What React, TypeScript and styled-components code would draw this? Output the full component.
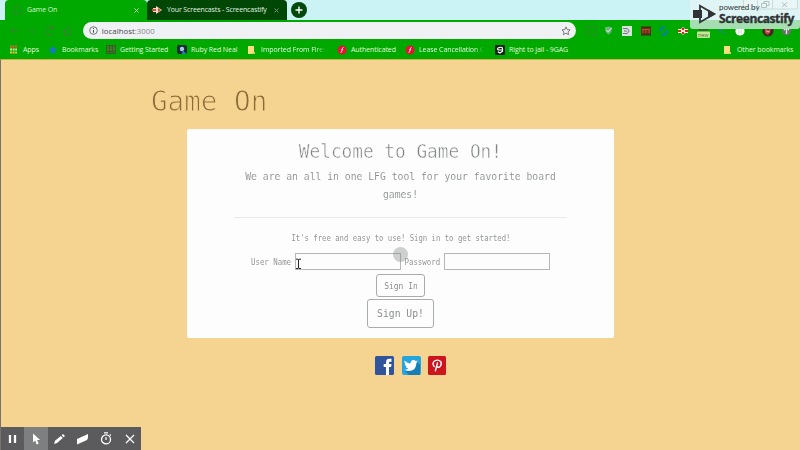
import React from "react";
import styled, { createGlobalStyle } from "styled-components";

const GlobalStyle = createGlobalStyle`
  * { box-sizing: border-box; }
  body { margin: 0; overflow: hidden; background: #f5d390; }
  svg { display: block; flex: none; }
`;

const Window = styled.div`
  position: relative;
  width: 800px;
  height: 450px;
  display: flex;
  flex-direction: column;
  background: #f5d390;
  font-family: "Open Sans", "Noto Sans", sans-serif;
  overflow: hidden;
`;

const TabStrip = styled.div`
  height: 20px;
  flex: none;
  display: flex;
  align-items: stretch;
  padding-left: 5px;
  background: #cbf3f5;
`;

const Tab = styled.div<{ $active?: boolean }>`
  width: ${(p) => (p.$active ? 142 : 140)}px;
  display: flex;
  align-items: center;
  gap: ${(p) => (p.$active ? 5 : 4)}px;
  padding: 0 8px 0 ${(p) => (p.$active ? 8 : 5)}px;
  border-radius: 4px 4px 0 0;
  color: ${(p) => (p.$active ? "#d9f7d5" : "#e3f2e3")};
  background: ${(p) => (p.$active ? "#00a900" : "#004705")};
`;

const TabTitle = styled.span<{ $spacing: number }>`
  flex: 1;
  white-space: nowrap;
  font-size: 7px;
  line-height: 12px;
  letter-spacing: ${(p) => p.$spacing}px;
`;

const NewTab = styled.div`
  width: 16px;
  height: 16px;
  margin: 2px 0 0 4px;
  border-radius: 50%;
  background: #00490b;
`;

const Toolbar = styled.div`
  height: 21px;
  flex: none;
  display: flex;
  align-items: center;
  padding-left: 8px;
  background: #00a900;
`;

const NavIcons = styled.div`
  width: 75px;
  display: flex;
  gap: 7px;
`;

const AddressBar = styled.div`
  width: 494px;
  height: 17px;
  display: flex;
  align-items: center;
  padding: 0 5px 0 6px;
  border-radius: 9px;
  background: #f0f1f5;
`;

const Url = styled.span`
  flex: 1;
  padding-left: 4px;
  font-size: 7.8px;
  line-height: 12px;
  letter-spacing: 0.02px;
  color: #45474b;
  span { color: #85888c; }
`;

const Extensions = styled.div`
  display: grid;
  grid-template-columns: 19px 18px 19px 18px 19px 19px 19px 19px 27px 19px 19px;
  margin-left: 9px;
  align-items: center;
`;

const BookmarkBar = styled.div`
  height: 18px;
  flex: none;
  display: grid;
  grid-template-columns: 39px 58px 70px 71px 90px 68px 90px 228px 77px;
  padding: 0 0 1px 9px;
  background: #00a900;
`;

const Bookmark = styled.div<{ $gap?: number; $fade?: boolean }>`
  display: flex;
  align-items: center;
  gap: ${(p) => p.$gap ?? 5}px;
  span {
    font-size: 7px;
    line-height: 12px;
    letter-spacing: -0.08px;
    white-space: nowrap;
    color: #e2f8df;
    ${(p) => p.$fade && "mask-image: linear-gradient(90deg, #000 86%, transparent);"}
  }
`;

const Page = styled.main`
  flex: 1;
  border-top: 1px solid #c9b53d;
  border-left: 1px solid #77756b;
  font-family: "DejaVu Sans Mono", "Liberation Mono", monospace;
`;

const Brand = styled.h1`
  width: max-content;
  margin: 24px 0 0 150px;
  font-size: 28px;
  line-height: 36px;
  font-weight: 400;
  color: #8a6a39;
  -webkit-text-stroke: 0.95px #f5d390;
  transform: scaleX(0.985);
  transform-origin: left;
`;

const Card = styled.section`
  width: 427px;
  height: 209px;
  margin: 9px 0 0 186px;
  display: flex;
  flex-direction: column;
  align-items: center;
  border-radius: 2px;
  background: #fefdfe;
  color: #8e9291;
`;

const Heading = styled.h2`
  margin: 8px 0 0;
  font-size: 20px;
  line-height: 28px;
  font-weight: 400;
  white-space: nowrap;
  color: #808483;
  -webkit-text-stroke: 0.5px #fefdfe;
  transform: scaleX(0.888);
`;

const Lead = styled.p`
  margin: 3px 0 0;
  font-size: 11px;
  line-height: 17.5px;
  text-align: center;
  white-space: nowrap;
  color: #858a89;
  -webkit-text-stroke: 0.1px #fefdfe;
  transform: scaleX(0.885);
`;

const Divider = styled.div`
  width: 333px;
  height: 1px;
  margin-top: 14px;
  background: #e9e9ea;
`;

const Hint = styled.p`
  margin: 13px 0 0;
  font-size: 8.5px;
  line-height: 14px;
  white-space: nowrap;
  color: #929695;
  transform: scaleX(0.856);
`;

const Fields = styled.form`
  display: grid;
  grid-template-columns: 44px 106px 43px 106px;
  align-items: center;
  margin-top: 8px;
`;

const FieldLabel = styled.label<{ $indent?: number }>`
  padding-left: ${(p) => p.$indent ?? 0}px;
  font-size: 8.5px;
  line-height: 14px;
  white-space: nowrap;
  color: #929695;
  transform: scaleX(0.87);
  transform-origin: left;
`;

const Input = styled.input`
  width: 106px;
  height: 17px;
  padding: 0 3px;
  border: 1px solid #b4b8b7;
  outline: 0;
  background: transparent;
`;

const Button = styled.button<{ $large?: boolean }>`
  width: ${(p) => (p.$large ? 67 : 49)}px;
  height: ${(p) => (p.$large ? 29 : 23)}px;
  margin-top: ${(p) => (p.$large ? 2 : 4)}px;
  padding: 0;
  display: flex;
  align-items: center;
  justify-content: center;
  border: 1px solid #a8acab;
  border-radius: 3px;
  background: transparent;
  color: #8a8f8e;
  font-family: inherit;
  font-size: ${(p) => (p.$large ? 11 : 9)}px;
  span { white-space: nowrap; transform: scaleX(0.885); }
`;

const Social = styled.div`
  display: flex;
  gap: 7px;
  margin: 18px 0 0 374px;
`;

const ClickHalo = styled.div`
  position: absolute;
  left: 393px;
  top: 247px;
  width: 15px;
  height: 15px;
  border-radius: 50%;
  background: rgba(130, 132, 132, 0.38);
`;

const TextCursor = styled.svg`
  position: absolute;
  left: 295px;
  top: 258px;
`;

const Watermark = styled.div`
  position: absolute;
  left: 690px;
  top: 0;
  width: 110px;
  height: 29px;
  display: flex;
  gap: 2px;
  padding-left: 3px;
  color: #303437;
  background: linear-gradient(#dff4f4 20px, #a5deb0 20px);
  border-radius: 0 0 3px 3px;
`;

const CaptionButtons = styled.svg`
  position: absolute;
  left: 53px;
  top: 0;
`;

const WatermarkText = styled.div`
  position: relative;
  display: flex;
  flex-direction: column;
  padding-top: 2px;
`;

const Powered = styled.span`
  font-family: Lato, "Open Sans", sans-serif;
  font-size: 8px;
  line-height: 10px;
  letter-spacing: -0.1px;
`;

const WatermarkName = styled.strong`
  font-size: 12px;
  line-height: 14px;
  letter-spacing: -0.4px;
  -webkit-text-stroke: 0.4px #303437;
`;

const RecorderBar = styled.div`
  position: absolute;
  left: 1px;
  bottom: 0;
  display: flex;
  height: 23px;
  background: #5b5a5c;
`;

const Tool = styled.div<{ $selected?: boolean }>`
  width: 23.4px;
  display: flex;
  align-items: center;
  justify-content: center;
  background: ${(p) => (p.$selected ? "#7e7f80" : "transparent")};
`;

const Close = ({ color = "#d9f7d5" }: { color?: string }) => (
  <svg width="5" height="5" viewBox="0 0 5 5"><path d="M.5.5l4 4m0-4l-4 4" stroke={color} strokeWidth=".9" /></svg>
);

const Folder = () => (
  <svg width="9" height="10" viewBox="0 0 9 10"><path d="M1 1h6v6h1v2H1z" fill="#f6df83" /><path d="M6 7h2v2H2v-.6h4z" fill="#d9ca71" /></svg>
);

const RedDot = () => (
  <svg width="10" height="10" viewBox="0 0 10 10"><circle cx="5" cy="5" r="4.5" fill="#e31331" /><path d="M6.5 2.2L4.6 4.6h1L3.8 7.8" stroke="#fff" fill="none" strokeWidth=".9" /></svg>
);

export default function App() {
  return (
    <Window>
      <GlobalStyle />
      <TabStrip>
        <Tab $active>
          <svg width="9" height="10" viewBox="0 0 9 10"><path d="M1 1h4l3 3v5H1z" fill="none" stroke="#4a7346" strokeWidth="1" strokeDasharray="1.5 .8" /></svg>
          <TabTitle $spacing={-0.1}>Game On</TabTitle>
          <Close />
        </Tab>
        <Tab>
          <svg width="11" height="10" viewBox="0 0 11 10"><path d="M1 3h3V1l6 4-6 4V7H1z" fill="#ffd9c7" /><path d="M0 4h4v2H0zM6 3l3 2-3 2z" fill="#d54e38" /></svg>
          <TabTitle $spacing={-0.15}>Your Screencasts - Screencastify</TabTitle>
          <Close color="#7d9b7e" />
        </Tab>
        <NewTab>
          <svg width="16" height="16" viewBox="0 0 16 16"><path d="M8 4.5v7M4.5 8h7" stroke="#fff" strokeWidth="1.4" /></svg>
        </NewTab>
      </TabStrip>

      <Toolbar>
        <NavIcons>
          <svg width="11" height="10" viewBox="0 0 11 10"><path d="M10 5H2m4-4L2 5l4 4" fill="none" stroke="#417a3d" strokeDasharray="3 .6" /></svg>
          <svg width="11" height="10" viewBox="0 0 11 10"><path d="M1 5h8M5 1l4 4-4 4" fill="none" stroke="#2a8f2a" strokeDasharray="2 1" /></svg>
          <svg width="11" height="10" viewBox="0 0 11 10"><path d="M9 3a4 4 0 1 0 0 4M9 0v3H6" fill="none" stroke="#4a7346" strokeDasharray="3 .6" /></svg>
          <svg width="11" height="10" viewBox="0 0 11 10"><path d="M1 5l4.5-4L10 5M2.5 4v5h6V4" fill="none" stroke="#4a7346" strokeDasharray="3 .6" /></svg>
        </NavIcons>
        <AddressBar>
          <svg width="9" height="9" viewBox="0 0 9 9"><circle cx="4.5" cy="4.5" r="3.8" fill="none" stroke="#55585c" strokeWidth=".8" /><path d="M4.5 4v2.7M4.5 2v1" stroke="#44474b" /></svg>
          <Url>localhost<span>:3000</span></Url>
          <svg width="10" height="10" viewBox="0 0 10 10"><path d="M5 .9l1.2 2.7 2.9.3L7 5.9l.6 2.8L5 7.2 2.4 8.7 3 5.9.9 3.9l2.9-.3z" fill="none" stroke="#5a5d60" strokeWidth=".8" /></svg>
        </AddressBar>
        <Extensions>
          <svg width="12" height="10" viewBox="0 0 12 10"><path d="M1 3V1h10v8H7M1 5q4 0 4 4M1 7q2 0 2 2" fill="none" stroke="#4a7a46" strokeDasharray="1.5 .8" /></svg>
          <svg width="9" height="10" viewBox="0 0 10 10"><path d="M1 1l4-1 4 1q0 6-4 8-4-2-4-8z" fill="#6bb77b" /><path d="M2.5 4l2 2 3.5-4" stroke="#e9f6e9" fill="none" /></svg>
          <svg width="10" height="10" viewBox="0 0 10 10"><path d="M0 0h10v10H0z" fill="#d9e0de" /><path d="M1 2.5h4q4 2.5 0 5H1M2 5h3" fill="none" stroke="#6f777a" /></svg>
          <svg width="10" height="10" viewBox="0 0 10 10"><path d="M0 1h10v8H0z" fill="#672c1a" /><path d="M1 3.5h8M2 4v3m3-3v3m3-3v3" stroke="#b5522c" /><path d="M0 1h10M0 9h10" stroke="#372d18" /></svg>
          <svg width="9" height="10" viewBox="0 0 10 10"><path d="M2 6a3 3 0 0 1 5-4M3 2h2M8 4a3 3 0 0 1-5 4M5 8h3" fill="none" stroke="#087bb1" strokeWidth="1.7" /></svg>
          <svg width="10" height="10" viewBox="0 0 10 10"><path d="M0 3h3l2-2 2 2h3v4H7L5 9 3 7H0z" fill="#ffe6e0" /><path d="M0 4h3v2H0zM4 2h2v2H4zm0 4h2v2H4zM7 4h3v2H7z" fill="#d8281f" /></svg>
          <svg width="13" height="16" viewBox="0 0 13 16"><path d="M2 3h9v5H2z" fill="#296d23" /><rect y="8.5" width="13" height="6.5" rx="1" fill="#c4e795" /><text x="1" y="13.6" fontSize="5.3" fontFamily="Open Sans" fill="#477a37">new</text></svg>
          <svg width="10" height="10" viewBox="0 0 10 10"><path d="M1 2l4 1 1 3 3 1M2 5l3-2" fill="none" stroke="#168c87" strokeWidth="1.2" /></svg>
          <svg width="10" height="10" viewBox="0 0 10 10"><circle cx="5" cy="5" r="4.6" fill="#f5faf4" /><path d="M3 4h1m2 0h1M3 6h4" stroke="#d0ddd0" /></svg>
          <svg width="12" height="12" viewBox="0 0 12 12"><circle cx="6" cy="6" r="5.6" fill="#43281f" /><path d="M3 3l3 2 3-2-1 4-2 3-3-2z" fill="#bd464b" /><path d="M4 6l4 1" stroke="#e4a69c" /></svg>
          <svg width="11" height="11" viewBox="0 0 11 11"><circle cx="5.5" cy="5.5" r="4.8" fill="#667267" /><path d="M5.5 9V3M3 5l2.5-2.5L8 5" fill="none" stroke="#e4ebe4" strokeWidth="1.3" /></svg>
        </Extensions>
      </Toolbar>

      <BookmarkBar>
        <Bookmark>
          <svg width="9" height="9" viewBox="0 0 9 9"><path d="M1 1.5h7" stroke="#e65c37" strokeWidth="2" strokeDasharray="2 .6" /><path d="M1 4.5h7" stroke="#d2e7a0" strokeWidth="2" strokeDasharray="2 .6" /><path d="M1 7.5h7" stroke="#f1c348" strokeWidth="2" strokeDasharray="2 .6" /></svg>
          <span>Apps</span>
        </Bookmark>
        <Bookmark $gap={4}>
          <svg width="10" height="10" viewBox="0 0 10 10"><path d="M5 .7l1.3 2.8 3 .4-2.2 2 .5 3L5 7.4 2.3 8.9l.5-3-2.2-2 3-.4z" fill="#1676d2" /></svg>
          <span>Bookmarks</span>
        </Bookmark>
        <Bookmark $gap={4}>
          <svg width="10" height="9" viewBox="0 0 10 9"><path d="M0 0h10v9H0z" fill="#31651c" /><path d="M2 1v7m3-7v7m3-7v7M1 4h8" stroke="#679052" strokeWidth=".7" strokeDasharray="2 1" /></svg>
          <span>Getting Started</span>
        </Bookmark>
        <Bookmark $gap={4}>
          <svg width="11" height="10" viewBox="0 0 11 10"><rect x="1" width="10" height="9" rx="2" fill="#182d38" /><circle cx="6" cy="4" r="2.2" fill="#a7cce0" /><path d="M7 5l3 4H6z" fill="#2681c7" /></svg>
          <span>Ruby Red Neal</span>
        </Bookmark>
        <Bookmark $fade><Folder /><span>Imported From Firef</span></Bookmark>
        <Bookmark $gap={4}><RedDot /><span>Authenticated</span></Bookmark>
        <Bookmark $gap={4} $fade><RedDot /><span>Lease Cancellation C</span></Bookmark>
        <Bookmark $gap={4}>
          <svg width="10" height="10" viewBox="0 0 10 10"><rect width="10" height="10" rx="1" fill="#102411" /><path d="M7 5H4.5q-2 0-2-1.2T5 2.3 7.5 4v2.2L5 8 2.8 6.7" fill="none" stroke="#fff" strokeWidth="1.2" /></svg>
          <span>Right to jail - 9GAG</span>
        </Bookmark>
        <Bookmark><Folder /><span>Other bookmarks</span></Bookmark>
      </BookmarkBar>

      <Page>
        <Brand>Game On</Brand>
        <Card>
          <Heading>Welcome to Game On!</Heading>
          <Lead>We are an all in one LFG tool for your favorite board<br />games!</Lead>
          <Divider />
          <Hint>It's free and easy to use! Sign in to get started!</Hint>
          <Fields>
            <FieldLabel htmlFor="user">User Name</FieldLabel>
            <Input id="user" />
            <FieldLabel htmlFor="password" $indent={4}>Password</FieldLabel>
            <Input id="password" type="password" />
          </Fields>
          <Button><span>Sign In</span></Button>
          <Button $large><span>Sign Up!</span></Button>
        </Card>
        <Social>
          <svg width="19" height="19" viewBox="0 0 19 19"><rect width="19" height="19" rx="1.5" fill="#32549b" /><path d="M11 19v-8H8.700V8H11V6.200Q11 2.800 14.500 2.800h2v3H15q-1 0-1 1V8h2.500l-.4 3H14v8z" fill="#fff" /></svg>
          <svg width="20" height="19" viewBox="0 0 20 19"><rect x="1" width="19" height="19" rx="2" fill="#25a5de" /><path d="M15 5l4 4v10H8l-4-4z" fill="#157eb6" /><path d="M3.500 4.500q3 3 6 3 0-3.500 3-3.500 1.400 0 2.200 1l1.600-.6-.9 1.500 1.400-.3-1.400 1.500q0 7.400-7 8-3 0-5-1.300 2.400 0 3.800-1.200-2-.3-2.600-2h1.200q-2.100-1-2.200-2.800l1 .3Q2.900 6.500 3.500 4.500z" fill="#fff" /></svg>
          <svg width="19" height="19" viewBox="0 0 19 19"><rect width="18" height="19" rx="1.5" fill="#cc151d" /><path d="M6.200 10.400Q3.600 7.600 6.500 5q3.600-2 6.100.4 1.600 2.800-.6 5.200-2.200 1.600-3.300-.6M9.500 7L7.400 14.800" fill="none" stroke="#fff" strokeWidth="1.4" strokeLinecap="round" /></svg>
        </Social>
      </Page>

      <ClickHalo />
      <TextCursor width="7" height="12" viewBox="0 0 7 12"><path d="M1 1.2h2l.5.6.5-.6h2M3.5 1.5v8.7M1 10.5h2l.5-.6.5.6h2" fill="none" stroke="#252929" strokeWidth="1" /></TextCursor>

      <Watermark>
        <CaptionButtons width="57" height="10" viewBox="0 0 57 10">
          <path d="M.5 0v8q0 1 1 1h52q1 0 1-1V0" fill="#e9f6f6" stroke="#c9dbdc" />
          <path d="M14.5 0v9M29.5 0v9" stroke="#c9dbdc" />
          <path d="M18.5 3.5h5v4h-5zM21 3.500V1.500h5v4h-2M39 2.500l5 4.500m0-4.500l-5 4.500" fill="none" stroke="#b0bfc1" />
        </CaptionButtons>
        <svg width="24" height="26" viewBox="0 0 24 26"><path d="M0 10h9v8H0z" fill="#303437" /><path d="M7 10V5.800L21 14 7 22.200V18" fill="none" stroke="#303437" strokeWidth="1.8" /><path d="M15 9.500l8 4.500-8 4.500z" fill="#303437" /></svg>
        <WatermarkText>
          <Powered>powered by</Powered>
          <WatermarkName>Screencastify</WatermarkName>
        </WatermarkText>
      </Watermark>

      <RecorderBar>
        <Tool><svg width="9" height="10" viewBox="0 0 9 10"><path d="M2 1v8M7 1v8" stroke="#fff" strokeWidth="2.3" /></svg></Tool>
        <Tool $selected><svg width="9" height="12" viewBox="0 0 9 12"><path d="M1 .5v9l2.2-2 1.5 4 2-.8-1.6-3.8h3z" fill="#fff" /></svg></Tool>
        <Tool><svg width="13" height="12" viewBox="0 0 13 12"><path d="M1 11l1-3.200L7.800 3l2 2L4 10zM8.600 2.300L10 1l2 2-1.400 1.300z" fill="#fff" /></svg></Tool>
        <Tool><svg width="13" height="12" viewBox="0 0 13 12"><path d="M1 6l11-5v4L11 7 1 11.500z" fill="#fff" /></svg></Tool>
        <Tool><svg width="12" height="13" viewBox="0 0 12 13"><circle cx="6" cy="7.400" r="4.500" fill="none" stroke="#fff" strokeWidth="1.3" /><path d="M4 .8h4M6 5v3M9.800 2.500l1 1" stroke="#fff" strokeWidth="1.2" /></svg></Tool>
        <Tool><svg width="10" height="10" viewBox="0 0 10 10"><path d="M1 1l8 8m0-8L1 9" stroke="#fff" strokeWidth="1.3" /></svg></Tool>
      </RecorderBar>
    </Window>
  );
}
